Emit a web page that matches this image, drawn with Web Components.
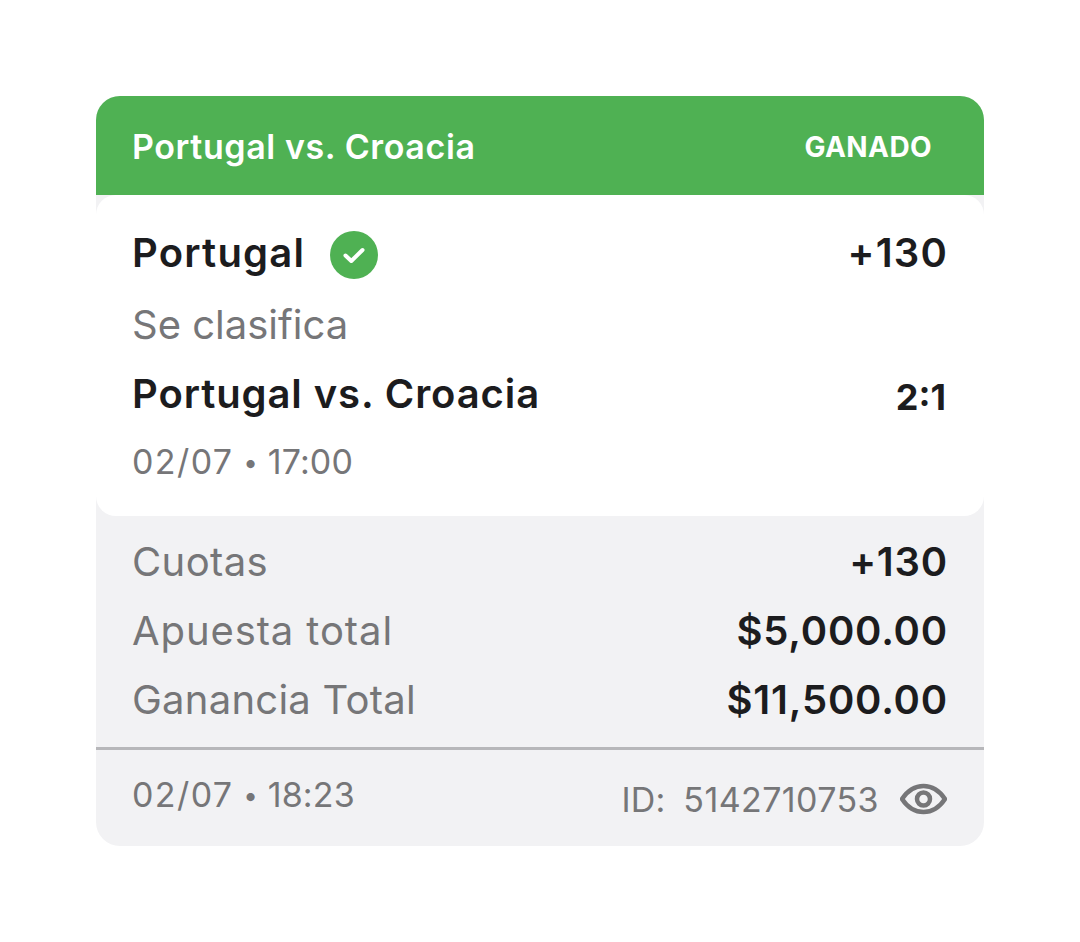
<!DOCTYPE html>
<html lang="es">
<head>
<meta charset="utf-8">
<title>Apuesta</title>
<style>
html, body { margin: 0; background: #fff; }
body { padding: 96px; font-family: Inter, "Liberation Sans", sans-serif; }
</style>
</head>
<body>
<bet-card>
	<bet-header slot="header" title-text="Portugal vs. Croacia" status="GANADO"></bet-header>
	<bet-selection slot="selection"></bet-selection>
	<bet-row label="Cuotas" value="+130" style="--label-spacing:.4px"></bet-row>
	<bet-row label="Apuesta total" value="$5,000.00" style="--label-spacing:.9px"></bet-row>
	<bet-row label="Ganancia Total" value="$11,500.00" style="--label-spacing:.25px"></bet-row>
	<bet-footer slot="footer" day="02/07" time="18:23" bet-id="5142710753"></bet-footer>
</bet-card>
<script>
class BetCard extends HTMLElement {
	constructor() {
		super();
		this.attachShadow({mode: 'open'}).innerHTML = `
		<style>
		:host {
			display:block;
			width:888px;
			height:750px;
			border-radius:24px;
			background:#f2f2f4;
			overflow:hidden;
		}
		.rows {
			padding:11px 36px 0;
			height:231px;
			box-sizing:border-box;
			display:flex;
			flex-direction:column;
		}
		</style>
		<slot name="header"></slot>
		<slot name="selection"></slot>
		<div class="rows"><slot></slot></div>
		<slot name="footer"></slot>`;
	}
}

class BetHeader extends HTMLElement {
	constructor() {
		super();
		this.attachShadow({mode: 'open'}).innerHTML = `
		<style>
		:host {
			display:flex;
			align-items:center;
			justify-content:space-between;
			height:99px;
			box-sizing:border-box;
			padding:2px 52px 0 36px;
			background:#4fb153;
			color:#fff;
			font-weight:600;
		}
		.title { font-size:34px; letter-spacing:.6px; }
		.status { font-size:28px; font-weight:700; letter-spacing:.4px; }
		</style>
		<span class="title"></span>
		<span class="status"></span>`;
	}

	connectedCallback() {
		this.shadowRoot.querySelector('.title').textContent = this.getAttribute('title-text');
		this.shadowRoot.querySelector('.status').textContent = this.getAttribute('status');
	}
}

class BetSelection extends HTMLElement {
	constructor() {
		super();
		this.attachShadow({mode: 'open'}).innerHTML = `
		<style>
		:host {
			display:block;
			height:321px;
			box-sizing:border-box;
			padding:22px 36px 0;
			background:#fff;
			border-radius:20px;
			color:#1c1c1e;
		}
		.line { display:flex; align-items:center; justify-content:space-between; }
		.pick { height:70px; font-size:40px; font-weight:600; letter-spacing:1.2px; }
		.team { display:flex; align-items:center; gap:25px; }
		.team svg { position:relative; top:3px; }
		.market { height:74px; font-size:40px; color:#767678; }
		.match { height:64px; font-size:40px; font-weight:600; letter-spacing:.9px; }
		.score { font-size:36px; font-weight:700; letter-spacing:0; padding:8px 2px 0 0; }
		.date { font-size:34px; color:#767678; padding-top:16px; letter-spacing:.15px; }
		.day { letter-spacing:1.4px; }
		.bullet { font-size:26px; vertical-align:2px; }
		svg { display:block; }
		</style>
		<div class="line pick">
			<span class="team">Portugal
				<svg width="48" height="48" viewBox="0 0 48 48">
					<circle cx="24" cy="24" r="24" fill="#4fb153"/>
					<path d="M15.5 24.5l5.8 5.5 11.2-11" fill="none" stroke="#fff" stroke-width="4" stroke-linecap="round" stroke-linejoin="round"/>
				</svg>
			</span>
			<span>+130</span>
		</div>
		<div class="line market">Se clasifica</div>
		<div class="line match"><span>Portugal vs. Croacia</span><span class="score">2:1</span></div>
		<div class="date"><span class="day">02/07</span> <span class="bullet">•</span> 17:00</div>`;
	}
}

class BetRow extends HTMLElement {
	constructor() {
		super();
		this.attachShadow({mode: 'open'}).innerHTML = `
		<style>
		:host {
			display:flex;
			align-items:center;
			justify-content:space-between;
			height:69px;
			font-size:40px;
		}
		.label { color:#767678; letter-spacing:var(--label-spacing, 0); }
		.value { color:#1c1c1e; font-weight:600; letter-spacing:.8px; }
		</style>
		<span class="label"></span>
		<span class="value"></span>`;
	}

	connectedCallback() {
		this.shadowRoot.querySelector('.label').textContent = this.getAttribute('label');
		this.shadowRoot.querySelector('.value').textContent = this.getAttribute('value');
	}
}

class BetFooter extends HTMLElement {
	constructor() {
		super();
		this.attachShadow({mode: 'open'}).innerHTML = `
		<style>
		:host {
			display:flex;
			justify-content:space-between;
			height:99px;
			box-sizing:border-box;
			padding:0 37px 0 36px;
			border-top:3px solid #b7b7ba;
			color:#767678;
			font-size:34px;
			letter-spacing:.15px;
		}
		.date { padding-top:24px; }
		.day { letter-spacing:1.4px; }
		.bullet { font-size:26px; vertical-align:2px; }
		.id { display:flex; align-items:center; height:98px; }
		.prefix { margin-right:18px; }
		.num { letter-spacing:.4px; }
		.id svg { margin-left:21px; display:block; }
		</style>
		<span class="date"><span class="day"></span> <span class="bullet">•</span> <span class="time"></span></span>
		<span class="id">
			<span class="prefix">ID:</span>
			<span class="num"></span>
			<svg width="47" height="32" viewBox="0 0 47 32" fill="none" stroke="#767678">
				<path d="M2 16C8 7 15 3 23.500 3s15.500 4 21.500 13c-6 9-13 13-21.500 13S8 25 2 16z" stroke-width="4.500" stroke-linejoin="round"/>
				<circle cx="23.500" cy="16" r="6.500" stroke-width="4.500"/>
			</svg>
		</span>`;
	}

	connectedCallback() {
		this.shadowRoot.querySelector('.day').textContent = this.getAttribute('day');
		this.shadowRoot.querySelector('.time').textContent = this.getAttribute('time');
		this.shadowRoot.querySelector('.num').textContent = this.getAttribute('bet-id');
	}
}

customElements.define('bet-card', BetCard);
customElements.define('bet-header', BetHeader);
customElements.define('bet-selection', BetSelection);
customElements.define('bet-row', BetRow);
customElements.define('bet-footer', BetFooter);
</script>
</body>
</html>
